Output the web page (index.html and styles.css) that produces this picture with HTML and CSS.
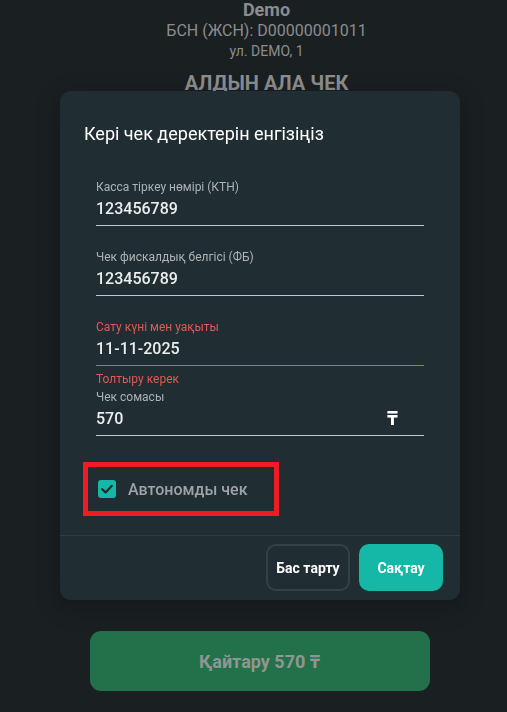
FILE: index.html
```html
<!DOCTYPE html>
<html lang="kk">
<head>
<meta charset="utf-8">
<title>Кері чек</title>
<link rel="stylesheet" href="styles.css">
</head>
<body>
<div class="page">
  <header class="shop">
    <div class="shop-name">Demo</div>
    <div class="shop-bin">БСН (ЖСН): D00000001011</div>
    <div class="shop-addr">ул. DEMO, 1</div>
    <div class="shop-title">АЛДЫН АЛА ЧЕК</div>
  </header>
  <main class="spacer"></main>
  <button class="return-btn">Қайтару 570 ₸</button>
</div>

<div class="modal">
  <h2 class="modal-title">Кері чек деректерін енгізіңіз</h2>
  <div class="fields">
    <div class="field">
      <div class="field-label">Касса тіркеу нөмірі (КТН)</div>
      <div class="field-input"><span class="field-value">123456789</span></div>
    </div>
    <div class="field">
      <div class="field-label">Чек фискалдық белгісі (ФБ)</div>
      <div class="field-input"><span class="field-value">123456789</span></div>
    </div>
    <div class="field field-error">
      <div class="field-label">Сату күні мен уақыты</div>
      <div class="field-input"><span class="field-value">11-11-2025</span></div>
      <div class="field-help">Толтыру керек</div>
    </div>
    <div class="field">
      <div class="field-label">Чек сомасы</div>
      <div class="field-input"><span class="field-value">570</span><span class="field-suffix">₸</span></div>
    </div>
  </div>
  <div class="check-row">
    <span class="checkbox">
      <svg width="18" height="18" viewBox="0 0 18 18"><path d="M4.2 9.2 L7.6 12.4 L13.8 5.8" fill="none" stroke="#1d2a2f" stroke-width="2.2" stroke-linecap="round" stroke-linejoin="round"/></svg>
    </span>
    <span class="check-label">Автономды чек</span>
  </div>
  <div class="modal-actions">
    <button class="btn btn-outline">Бас тарту</button>
    <button class="btn btn-primary">Сақтау</button>
  </div>
</div>
</body>
</html>
```

FILE: styles.css
```css
* { box-sizing: border-box; }
html, body { margin: 0; padding: 0; }
body {
  background: #1a1f21;
  font-family: Roboto, "Noto Sans", "DejaVu Sans", sans-serif;
  width: 507px;
  height: 712px;
  overflow: hidden;
}
.page {
  height: 712px;
  display: flex;
  flex-direction: column;
  align-items: center;
}
.shop {
  text-align: center;
  color: #8b8d8e;
  padding-left: 26px;
}
.shop-name {
  font-size: 18px;
  font-weight: 700;
  line-height: 20px;
}
.shop-bin {
  font-size: 16px;
  line-height: 22px;
}
.shop-addr {
  font-size: 14px;
  line-height: 18px;
}
.shop-title {
  font-size: 20px;
  font-weight: 700;
  line-height: 24px;
  margin-top: 11px;
}
.spacer { flex: 1; }
.return-btn {
  width: 340px;
  height: 60px;
  margin: 0 0 21px 12px;
  border: none;
  border-radius: 11px;
  background: #22714b;
  color: #8f9792;
  font-family: inherit;
  font-size: 18px;
  font-weight: 700;
}

.modal {
  position: fixed;
  top: 91px;
  left: 60px;
  width: 400px;
  height: 509px;
  background: #202d32;
  border-radius: 11px;
  box-shadow: 0 6px 24px rgba(0, 0, 0, 0.25);
  display: flex;
  flex-direction: column;
}
.modal-title {
  margin: 0;
  padding: 31px 24px 0;
  font-size: 18px;
  font-weight: 400;
  line-height: 24px;
  color: #ffffff;
}
.fields {
  padding: 33px 36px 0;
  display: flex;
  flex-direction: column;
  gap: 23px;
}
.field-label {
  font-size: 12px;
  line-height: 16px;
  color: #aeb3b5;
}
.field-input {
  display: flex;
  align-items: center;
  height: 31px;
  padding-bottom: 3px;
  border-bottom: 1px solid #c3c9ca;
}
.field-value {
  flex: 1;
  font-size: 16px;
  line-height: 22px;
  font-weight: 500;
  color: #eceeee;
}
.field-suffix {
  margin-right: 26px;
  font-size: 19px;
  line-height: 22px;
  font-weight: 700;
  color: #ffffff;
}
.field-error .field-label,
.field-error .field-help { color: #de5b57; }
.field-error .field-input { border-bottom-color: #de5b57; }
.field-help {
  font-size: 12px;
  line-height: 16px;
  margin-top: 5px;
  margin-bottom: -21px;
}
.check-row {
  margin: 26px 0 0 23px;
  width: 196px;
  height: 54px;
  border: 5px solid #ee1c24;
  display: flex;
  align-items: center;
  padding-left: 10px;
  gap: 12px;
}
.checkbox {
  width: 18px;
  height: 18px;
  border-radius: 3px;
  background: #15b8a6;
  display: flex;
}
.check-label {
  font-size: 16px;
  font-weight: 500;
  color: #9ea3a5;
}
.modal-actions {
  margin-top: 19px;
  border-top: 1px solid #2f3c41;
  padding: 8px 17px 9px;
  display: flex;
  justify-content: flex-end;
  gap: 9px;
}
.btn {
  width: 84px;
  height: 47px;
  border-radius: 10px;
  font-family: inherit;
  font-size: 14px;
  font-weight: 700;
  color: #ffffff;
}
.btn-outline {
  background: transparent;
  border: 2px solid #354146;
}
.btn-primary {
  background: #15b8a6;
  border: none;
}
```
